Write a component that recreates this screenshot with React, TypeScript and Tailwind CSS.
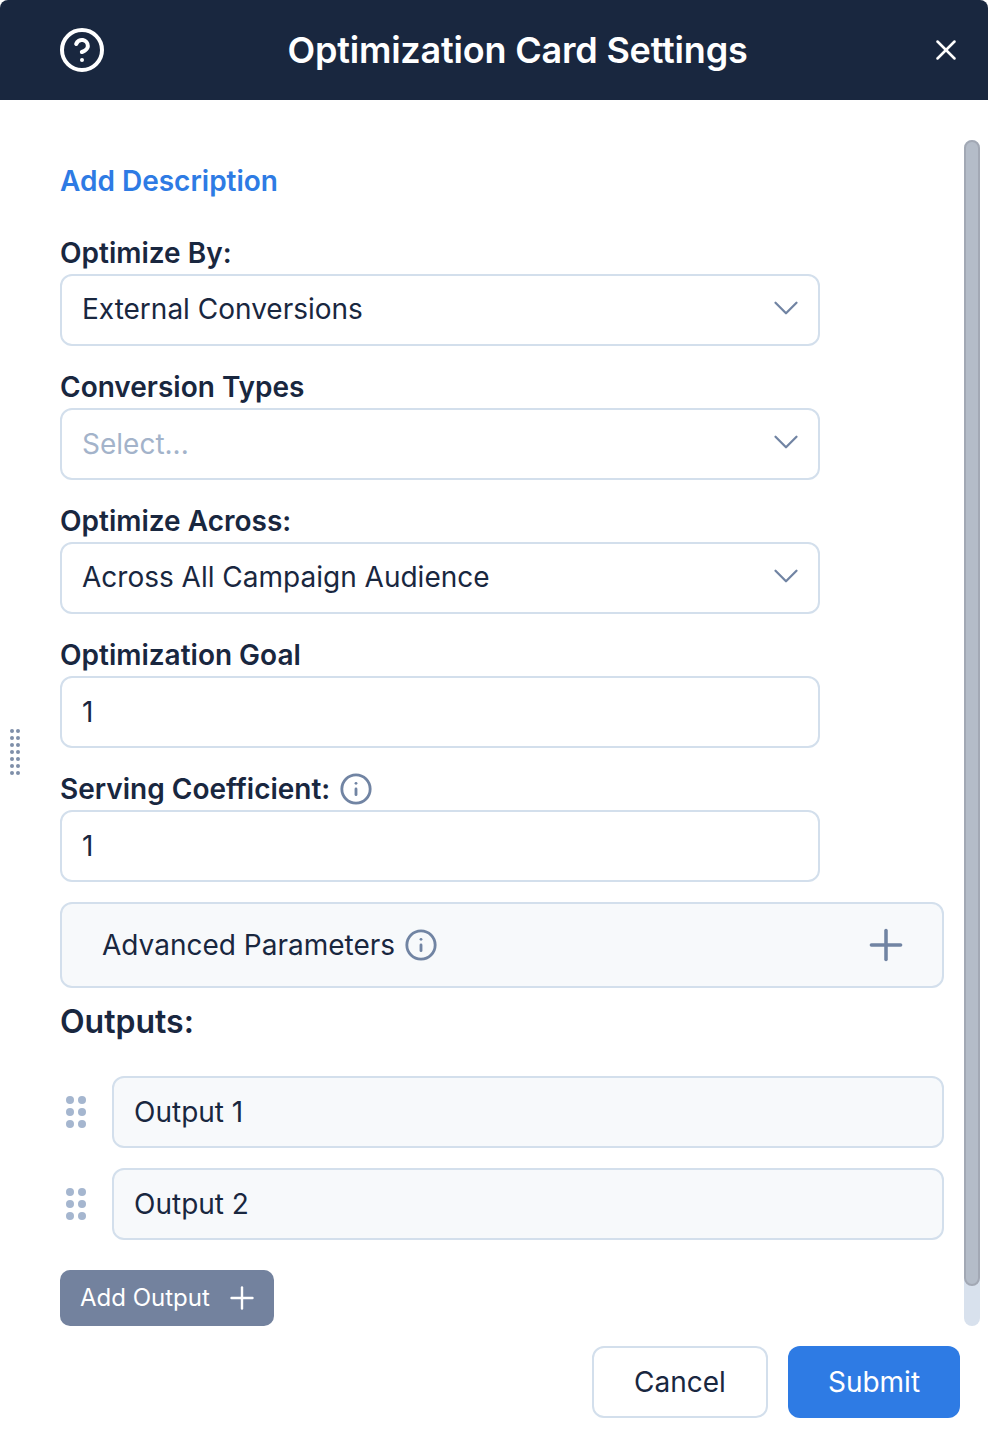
import { ChevronDown, CircleHelp, Info, Plus, X } from "lucide-react";

const sideDots = Array.from({ length: 14 });
const gripDots = Array.from({ length: 6 });

function Field({ label, value, placeholder, select, info }: { label: string; value?: string; placeholder?: string; select?: boolean; info?: boolean }) {
  return (
    <div className="mb-[20px]">
      <div className="flex h-[42px] items-center gap-[12px] text-[28px] font-semibold text-[#19273f]">
        {label}
        {info && <Info size={34} strokeWidth={2} className="text-[#7184a3] -ml-[3px]" />}
      </div>
      <div className="flex h-[72px] items-center justify-between rounded-[12px] border-2 border-[#d3dfec] bg-white pl-[20px] pr-[11px] text-[28px]">
        <span className={value ? (select ? "pb-[2px] text-[#19273f]" : "text-[#19273f]") : "text-[#a3b3ca]"}>{value ?? placeholder}</span>
        {select && <ChevronDown size={42} strokeWidth={1.3} className="mb-[4px] text-[#7184a3]" />}
      </div>
    </div>
  );
}

function OutputRow({ name }: { name: string }) {
  return (
    <div className="mb-[20px] flex items-center">
      <div className="ml-[6px] mr-[26px] grid w-[20px] grid-cols-2 gap-x-[4px] gap-y-[4px]">
        {gripDots.map((_, i) => (
          <div key={i} className="h-[8px] w-[8px] rounded-full bg-[#a5b6cf]" />
        ))}
      </div>
      <div className="flex h-[72px] flex-1 items-center rounded-[12px] border-2 border-[#d3dfec] bg-[#f7f9fb] pl-[20px] text-[28px] text-[#19273f]">
        {name}
      </div>
    </div>
  );
}

export default function App() {
  return (
    <div className="relative h-[1434px] w-[988px] overflow-hidden bg-white font-['Inter',sans-serif]">
      <div className="flex h-[100px] items-center justify-between rounded-t-[8px] bg-[#19273f] pl-[58px] pr-[25px] text-white">
        <CircleHelp size={48} strokeWidth={2} />
        <h1 className="text-[36px] font-semibold tracking-[-0.2px]">Optimization Card Settings</h1>
        <X size={34} strokeWidth={1.8} />
      </div>

      {/* drag handle on the left edge */}
      <div className="absolute left-[10px] top-[729px] grid w-[10px] grid-cols-2 gap-x-[2px] gap-y-[3px]">
        {sideDots.map((_, i) => (
          <div key={i} className="h-[4px] w-[4px] rounded-full bg-[#7f8fa9]" />
        ))}
      </div>

      <div className="mt-[40px] flex h-[1186px]">
        <div className="ml-[60px] w-[884px]">
          <div className="flex h-[82px] items-center text-[28px] font-semibold text-[#2e7be4]">Add Description</div>
          <div className="w-[760px] pt-[10px]">
            <Field label="Optimize By:" value="External Conversions" select />
            <Field label="Conversion Types" placeholder="Select..." select />
            <Field label="Optimize Across:" value="Across All Campaign Audience" select />
            <Field label="Optimization Goal" value="1" />
            <Field label="Serving Coefficient:" value="1" info />
          </div>
          <div className="flex h-[86px] items-center justify-between rounded-[12px] border-2 border-[#d3dfec] bg-[#f7f9fb] pl-[40px] pr-[31px]">
            <div className="flex items-center gap-[9px] text-[28px] text-[#19273f]">
              Advanced Parameters
              <Info size={34} strokeWidth={2} className="text-[#7184a3]" />
            </div>
            <Plus size={50} strokeWidth={1.7} className="text-[#7184a3]" />
          </div>
          <div className="mb-[32px] mt-[12px] flex h-[44px] items-center text-[32px] font-semibold text-[#19273f]">Outputs:</div>
          <OutputRow name="Output 1" />
          <OutputRow name="Output 2" />
          <button className="mt-[30px] flex h-[56px] w-[214px] items-center gap-[12px] rounded-[10px] bg-[#73829e] pl-[20px] text-[24px] text-white">
            Add Output
            <Plus size={36} strokeWidth={1.6} className="ml-[2px]" />
          </button>
        </div>
        <div className="ml-[20px] h-full w-[16px] rounded-full bg-[#d8e1ed]">
          <div className="h-[1146px] rounded-full border-2 border-[#a2a8b4] bg-[#b4bcc8]" />
        </div>
      </div>

      <div className="mt-[20px] flex justify-end gap-[20px] pr-[28px]">
        <button className="h-[72px] w-[176px] rounded-[12px] border-2 border-[#d3dfec] bg-white text-[28px] text-[#19273f]">Cancel</button>
        <button className="h-[72px] w-[172px] rounded-[12px] bg-[#2e7be4] text-[28px] text-white">Submit</button>
      </div>
    </div>
  );
}
